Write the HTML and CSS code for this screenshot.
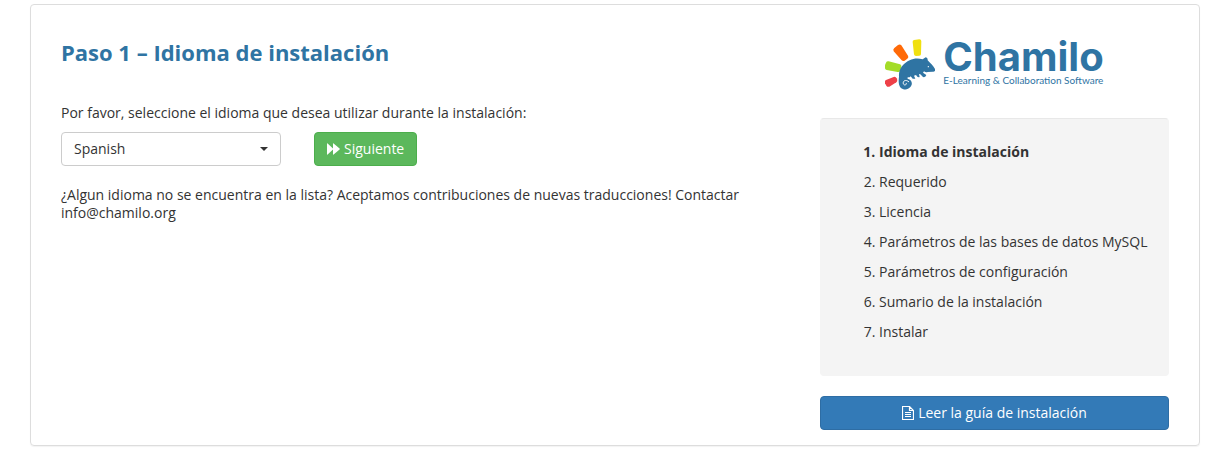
FILE: index.html
```html
<!DOCTYPE html>
<html lang="es">
<head>
<meta charset="utf-8">
<title>Chamilo – Instalación</title>
<link rel="stylesheet" href="styles.css">
</head>
<body>
<div class="panel">
  <main class="content">
    <h1 class="title">Paso 1 – Idioma de instalación</h1>
    <form class="form">
      <label class="label" for="language">Por favor, seleccione el idioma que desea utilizar durante la instalación:</label>
      <div class="controls">
        <div class="select-wrap">
          <select class="select" id="language"><option>Spanish</option></select>
        </div>
        <button class="btn btn-success" type="button">
          <svg class="icon-forward" viewBox="0 0 13 12" aria-hidden="true"><path d="M0 .6Q0 0 .6.4L6 5.4V.6Q6 0 6.6.4L12.6 5.6Q13 6 12.6 6.4L6.6 11.6Q6 12 6 11.4V6.6L.6 11.6Q0 12 0 11.4Z" fill="currentColor"/></svg>
          Siguiente
        </button>
      </div>
    </form>
    <p class="note">¿Algun idioma no se encuentra en la lista? Aceptamos contribuciones de nuevas traducciones! Contactar info@chamilo.org</p>
  </main>
  <aside class="sidebar">
    <div class="logo">
      <svg class="logo-mark" viewBox="15 25 150 153" aria-hidden="true">
        <path d="M98 34Q97 29 102 28L118 26Q124 26 124 32L123 70Q123 75 118 75L108 76Q103 76 102 71Z" fill="#f0e010"/>
        <path d="M41 62Q38 56 43 52L54 43Q60 39 64 44L84 75Q87 80 82 84L74 90Q69 93 65 89Z" fill="#ff6a08"/>
        <path d="M15 113Q14 106 16 101L18 96Q20 91 26 92L60 101Q65 103 64 109L61 120Q59 125 53 124L20 118Q15 117 15 113Z" fill="#a4dc28"/>
        <path d="M15 158Q13 151 18 148L41 139Q47 137 50 143Q54 151 49 155L28 168Q22 170 19 165Z" fill="#ee4048"/>
        <path d="M57 138C55 115 71 97 89 89C102 82 115 82 128 86L137 80Q144 81 143 89C152 98 162 108 166 117Q165 124 158 123L143 124Q137 126 132 122L129 126 139 133Q137 141 129 139L121 131 117 130 119 139Q113 142 108 133L102 135 106 144 98 144 92 137 89 140C82 139 79 142 87 146C97 151 98 162 91 169C83 179 70 178 62 171C54 162 56 147 57 138Z" fill="#2f74a3"/>
        <path d="M86 153C77 145 68 151 70 159C72 165 80 164 79 158" fill="none" stroke="#fff" stroke-width="3" stroke-linecap="round"/>
        <circle cx="145" cy="108" r="2" fill="#fff"/>
      </svg>
      <div class="logo-words">
        <span class="logo-name">Chamilo</span>
        <span class="logo-tag">E-Learning &amp; Collaboration Software</span>
      </div>
    </div>
    <div class="well">
      <ol class="steps">
        <li class="current">Idioma de instalación</li>
        <li>Requerido</li>
        <li>Licencia</li>
        <li>Parámetros de las bases de datos MySQL</li>
        <li>Parámetros de configuración</li>
        <li>Sumario de la instalación</li>
        <li>Instalar</li>
      </ol>
    </div>
    <a class="btn btn-primary" href="#guia">
      <svg class="icon-file" viewBox="0 0 12 14" aria-hidden="true"><path d="M.5.5H7.5L11.5 4.5V13.5H.5ZM7.5.5V4.5H11.5M3 6.5H9M3 8.5H9M3 10.5H9" fill="none" stroke="currentColor" stroke-width="1.2"/></svg>
      Leer la guía de instalación
    </a>
  </aside>
</div>
</body>
</html>
```
FILE: styles.css
```css
* { box-sizing: border-box; }

body {
  margin: 0;
  padding: 4px 32px 14px 30px;
  background: #fff;
  color: #333;
  font: 14px/18px "Open Sans", sans-serif;
}

.panel {
  display: grid;
  grid-template-columns: minmax(0, 2fr) minmax(0, 1fr);
  gap: 61px;
  padding: 30px 30px 15px;
  border: 1px solid #ddd;
  border-radius: 4px;
  box-shadow: 0 1px 1px rgba(0, 0, 0, .05);
}

.title {
  margin: 4px 0 38px;
  color: #2f74a3;
  font-size: 22px;
  line-height: 27px;
  font-weight: 700;
}

.label { display: block; margin-bottom: 10px; }

.controls { display: flex; gap: 33px; }

.select-wrap { position: relative; width: 220px; }

.select-wrap::after {
  content: "";
  position: absolute;
  top: 15px;
  right: 13px;
  border: 4px solid transparent;
  border-top-color: #333;
  border-bottom: 0;
  pointer-events: none;
}

.select {
  appearance: none;
  width: 100%;
  height: 34px;
  padding: 0 12px;
  border: 1px solid #ccc;
  border-radius: 4px;
  background: #fff;
  color: #333;
  font: inherit;
}

.btn {
  display: flex;
  align-items: center;
  justify-content: center;
  gap: 4px;
  height: 34px;
  padding: 0 12px;
  border: 1px solid;
  border-radius: 4px;
  color: #fff;
  font: inherit;
  text-decoration: none;
}

.btn-success { background: #5cb85c; border-color: #4cae4c; }
.btn-primary { background: #337ab7; border-color: #2e6da4; }

.icon-forward { width: 13px; height: 12px; }
.icon-file { width: 12px; height: 14px; }

.note { margin: 20px 0 0; }

.logo {
  display: flex;
  justify-content: center;
  gap: 8px;
  height: 63px;
  padding-top: 4px;
  margin-bottom: 20px;
}

.logo-mark { width: 50px; height: 51px; }

.logo-words { display: flex; flex-direction: column; color: #2f74a3; white-space: nowrap; }
.logo-name { font-family: Inter, sans-serif; font-size: 40px; line-height: 36px; font-weight: 700; }
.logo-tag { font-family: Lato, sans-serif; font-size: 10px; line-height: 10px; }

.well {
  margin-bottom: 20px;
  padding: 18px;
  border: 1px solid #f4f4f4;
  border-top-color: #e8e8e8;
  border-radius: 4px;
  background: #f4f4f4;
}

.steps { margin: 0 0 10px; padding-left: 40px; line-height: 30px; }
.current { font-weight: 700; }
```
